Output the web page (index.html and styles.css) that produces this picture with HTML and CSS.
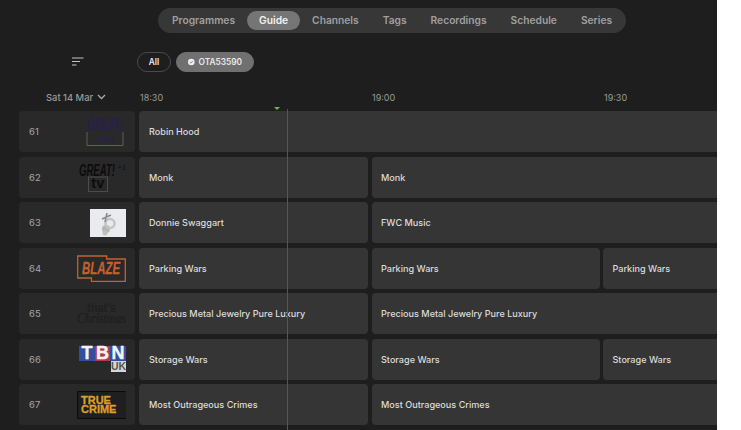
FILE: index.html
```html
<!DOCTYPE html>
<html lang="en">
<head>
<meta charset="utf-8">
<title>Guide</title>
<link rel="stylesheet" href="styles.css">
</head>
<body>
<main class="app">
  <nav class="tabs-wrap">
    <div class="tabs">
      <a class="tab">Programmes</a>
      <a class="tab active">Guide</a>
      <a class="tab">Channels</a>
      <a class="tab">Tags</a>
      <a class="tab">Recordings</a>
      <a class="tab">Schedule</a>
      <a class="tab">Series</a>
    </div>
  </nav>
  <div class="filters">
    <div class="sort-cell">
      <svg class="sort" width="13" height="10" viewBox="0 0 13 10"><path d="M1 1h11.500M1 4.500h8M1 8h4.500" stroke="#c4c4c4" stroke-width="1.200" fill="none"/></svg>
    </div>
    <span class="chip all">All</span>
    <span class="chip on">
      <svg width="8" height="8" viewBox="0 0 8 8"><circle cx="4" cy="4" r="4" fill="#eee"/><path d="M2.200 4.100 3.500 5.300 5.800 2.800" stroke="#777" stroke-width="1" fill="none"/></svg>
      OTA53590
    </span>
  </div>
  <div class="times">
    <div class="date">Sat 14 Mar
      <svg width="9" height="6" viewBox="0 0 9 6"><path d="M1 1l3.500 3.500L8 1" stroke="#aaa" stroke-width="1.300" fill="none"/></svg>
    </div>
    <div class="slot">18:30</div>
    <div class="slot">19:00</div>
    <div class="slot">19:30</div>
  </div>
  <div class="grid">
    <span class="marker"></span>
    <span class="now"></span>

    <div class="row">
      <div class="chan"><span class="num">61</span>
        <svg class="logo" width="40" height="28" viewBox="0 0 40 28">
          <text class="g-word purple" x="1" y="12" textLength="36" lengthAdjust="spacingAndGlyphs">GREAT!</text>
          <path d="M1 14V27.500H37V14" fill="none" stroke="#5a6550" stroke-width="1"/>
          <text class="g-real" x="19" y="24" text-anchor="middle">real</text>
        </svg>
      </div>
      <div class="progs"><div class="prog full">Robin Hood</div></div>
    </div>

    <div class="row">
      <div class="chan"><span class="num">62</span>
        <svg class="logo" width="48" height="29" viewBox="0 0 48 29">
          <text class="g-word black" x="1" y="12.500" textLength="36" lengthAdjust="spacingAndGlyphs">GREAT!</text>
          <text class="g-plus" x="39.500" y="7">+1</text>
          <rect x="10.500" y="14" width="19" height="14.500" fill="none" stroke="#4c4c4c" stroke-width="1"/>
          <text class="g-tv" x="20" y="25" text-anchor="middle">tv</text>
        </svg>
      </div>
      <div class="progs"><div class="prog half">Monk</div><div class="prog rest">Monk</div></div>
    </div>

    <div class="row">
      <div class="chan"><span class="num">63</span>
        <svg class="logo" width="36" height="28" viewBox="0 0 36 28">
          <rect width="36" height="28" fill="#e9ebee"/>
          <circle cx="16" cy="20" r="4" fill="#b5b5b5"/>
          <circle cx="20" cy="14.500" r="4.500" fill="none" stroke="#c4c4c4" stroke-width="2.500"/>
          <path d="M12 10l9-4M17 4l-2 9" stroke="#8c8c8c" stroke-width="1.600"/>
          <circle cx="15" cy="24" r="2.500" fill="#c0c0c0"/>
        </svg>
      </div>
      <div class="progs"><div class="prog half">Donnie Swaggart</div><div class="prog rest">FWC Music</div></div>
    </div>

    <div class="row">
      <div class="chan"><span class="num">64</span>
        <svg class="logo" width="49" height="27" viewBox="0 0 49 27"><path d="M.7 1h29v3h18.600v22.300H14.500v-3.300H.7z" fill="none" stroke="#c5602f" stroke-width="1.300"/><text class="blaze" x="5" y="19" textLength="38" lengthAdjust="spacingAndGlyphs">BLAZE</text></svg>
      </div>
      <div class="progs"><div class="prog half">Parking Wars</div><div class="prog mid">Parking Wars</div><div class="prog last">Parking Wars</div></div>
    </div>

    <div class="row">
      <div class="chan"><span class="num">65</span>
        <svg class="logo" width="49" height="24" viewBox="0 0 49 24">
          <text class="x-top" x="10" y="10" textLength="29" lengthAdjust="spacingAndGlyphs">that's</text>
          <text class="x-bot" x="0" y="21" textLength="49" lengthAdjust="spacingAndGlyphs">Christmas</text>
        </svg>
      </div>
      <div class="progs"><div class="prog half">Precious Metal Jewelry Pure Luxury</div><div class="prog rest">Precious Metal Jewelry Pure Luxury</div></div>
    </div>

    <div class="row">
      <div class="chan"><span class="num">66</span>
        <div class="tbn">
          <div class="tbn-top"><span class="blue">T</span><span class="red">B</span><span class="blue">N</span></div>
          <span class="uk">UK</span>
        </div>
      </div>
      <div class="progs"><div class="prog half">Storage Wars</div><div class="prog mid">Storage Wars</div><div class="prog last">Storage Wars</div></div>
    </div>

    <div class="row">
      <div class="chan"><span class="num">67</span>
        <div class="crime"><span>TRUE</span><span>CRIME</span></div>
      </div>
      <div class="progs"><div class="prog half">Most Outrageous Crimes</div><div class="prog rest">Most Outrageous Crimes</div></div>
    </div>
  </div>
</main>
</body>
</html>
```
FILE: styles.css
```css
* { box-sizing: border-box; }
html, body { margin: 0; height: 430px; overflow: hidden; background: #fff; }
body { font-family: Inter, "Liberation Sans", sans-serif; }
.app { width: 717px; height: 430px; background: #1e1e1e; overflow: hidden; }

.tabs-wrap { display: flex; padding: 8px 0 0 158px; }
.tabs { display: flex; align-items: center; height: 25px; padding: 0 2px; background: #373737; border-radius: 13px; }
.tab { display: block; padding: 0 12px; height: 19px; line-height: 18px; font-size: 10.240px; font-weight: 600; color: #9f9f9f; border-radius: 10px; white-space: nowrap; }
.tab.active { background: #757575; color: #f2f2f2; }

.filters { display: flex; align-items: center; height: 20px; margin-top: 19px; }
.sort-cell { width: 137px; padding-left: 71px; display: flex; align-items: center; }
.chip { display: flex; align-items: center; gap: 4px; height: 20px; padding: 0 11px; border-radius: 10px; border: 1px solid #4a4a4a; font-size: 8.300px; font-weight: 600; color: #eaeaea; margin-right: 5px; flex: none; }
.chip.all { width: 34px; justify-content: center; padding: 0; }
.chip.on { width: 78px; background: #707070; border-color: #707070; }

.times { display: flex; align-items: center; height: 14px; margin-top: 18px; font-size: 9px; color: #9a9a9a; }
.date { width: 140px; flex: none; padding-left: 46px; display: flex; align-items: center; gap: 4px; font-size: 9.400px; font-weight: 500; }
.slot { width: 232px; flex: none; }

.grid { position: relative; margin-top: 7px; padding-left: 19px; display: flex; flex-direction: column; gap: 4.500px; }
.marker { position: absolute; left: 274px; top: -4px; border: 3px solid transparent; border-top: 3px solid #6fb34d; border-bottom: 0; }
.now { position: absolute; left: 287px; top: -2px; bottom: -40px; width: 1px; background: #565656; z-index: 2; }

.row { display: flex; gap: 4px; height: 41px; flex: none; }
.chan { width: 116px; flex: none; display: flex; align-items: center; justify-content: space-between; padding: 0 9px 0 10px; background: #292929; border-radius: 4px; }
.num { font-size: 9.500px; color: #a3a8ac; }
.progs { display: flex; gap: 3.500px; flex: 1; min-width: 0; }
.prog { display: flex; align-items: center; padding-left: 10px; font-size: 9.100px; font-weight: 500; color: #dcdcdc; background: #353535; border-radius: 4px; white-space: nowrap; overflow: hidden; }
.prog.full { flex: 1; border-radius: 4px 0 0 4px; }
.prog.half { width: 229px; flex: none; }
.prog.mid { width: 228px; flex: none; padding-left: 9.500px; }
.prog.rest, .prog.last { flex: 1; border-radius: 4px 0 0 4px; padding-left: 9.500px; }

.logo { display: block; flex: none; overflow: visible; }
.g-word { font-family: "Liberation Sans", sans-serif; font-size: 16px; font-weight: 700; font-style: italic; }
.g-word.purple { fill: #2a1e50; }
.g-word.black { fill: #0c0c0c; }
.g-real { font-family: "Liberation Sans", sans-serif; font-size: 8.500px; font-weight: 700; fill: #2a1e50; letter-spacing: .5px; }
.g-plus { font-family: "Liberation Sans", sans-serif; font-size: 7.500px; fill: #111; }
.g-tv { font-family: "Liberation Sans", sans-serif; font-size: 14px; font-weight: 700; fill: #0c0c0c; letter-spacing: .5px; }
.blaze { font-family: "Liberation Sans", sans-serif; font-size: 16.500px; font-weight: 700; font-style: italic; fill: #c5602f; stroke: #c5602f; stroke-width: .3px; }
.x-top { font-family: "Liberation Sans", sans-serif; font-size: 12.500px; font-weight: 700; fill: #202020; }
.x-bot { font-family: "Liberation Serif", serif; font-size: 15px; font-weight: 700; font-style: italic; fill: #202020; }

.tbn { display: flex; flex-direction: column; align-items: flex-end; width: 47px; flex: none; font-family: "Liberation Sans", sans-serif; font-weight: 700; }
.tbn-top { display: flex; }
.tbn-top span { display: block; width: 16px; height: 15px; font-size: 18px; line-height: 15px; text-align: center; color: #f3f3f3; -webkit-text-stroke: .4px #f3f3f3; }
.tbn-top .blue { background: #324f9c; }
.tbn-top .red { width: 15px; background: #b33a44; }
.uk { width: 15px; height: 11px; background: #d5d5d5; color: #555; font-size: 10.500px; line-height: 11px; text-align: center; }
.crime { display: flex; flex-direction: column; justify-content: center; align-items: flex-start; width: 49px; height: 28px; flex: none; padding-left: 3px; background: #1f1f1f; border: 1px solid #0b0b0b; border-right-color: #1f1f1f; font-family: "Liberation Sans", sans-serif; font-weight: 700; font-size: 11px; line-height: 9px; color: #d9a02c; -webkit-text-stroke: .3px #d9a02c; }
```
